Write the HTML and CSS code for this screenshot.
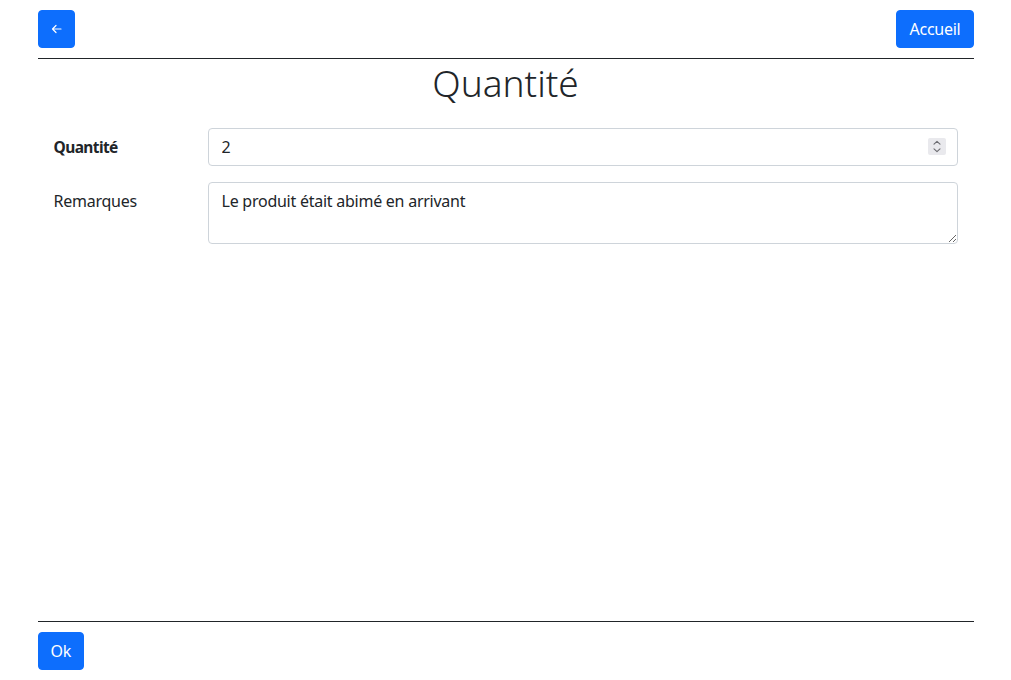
FILE: index.html
```html
<!DOCTYPE html>
<html lang="fr">
<head>
<meta charset="utf-8">
<title>Quantité</title>
<link rel="stylesheet" href="styles.css">
</head>
<body>
<div class="page">
  <header class="topbar">
    <button class="btn btn-icon" type="button" aria-label="Retour">
      <svg width="11" height="10" viewBox="0 0 11 10" fill="none" stroke="#fff" stroke-width="1.2" stroke-linecap="round" stroke-linejoin="round"><path d="M10 5H1.5M5 1.5L1.5 5L5 8.5"/></svg>
    </button>
    <button class="btn" type="button">Accueil</button>
  </header>
  <hr class="rule">
  <main class="content">
    <h1 class="title">Quantité</h1>
    <form class="form">
      <div class="form-row">
        <label class="form-label strong" for="qte">Quantité</label>
        <div class="field">
          <div class="number-wrap">
            <input id="qte" class="control" type="number" value="2">
            <span class="spinner" aria-hidden="true">
              <svg width="18" height="17" viewBox="0 0 18 17" fill="none" stroke="#6b6b70" stroke-width="1.1" stroke-linecap="round" stroke-linejoin="round"><path d="M6 6.2L9 3.4L12 6.2M6 10.8L9 13.6L12 10.8"/></svg>
            </span>
          </div>
        </div>
      </div>
      <div class="form-row">
        <label class="form-label" for="rem">Remarques</label>
        <div class="field">
          <textarea id="rem" class="control area">Le produit était abimé en arrivant</textarea>
        </div>
      </div>
    </form>
  </main>
  <hr class="rule">
  <footer class="footer">
    <button class="btn" type="button">Ok</button>
  </footer>
</div>
</body>
</html>
```

FILE: styles.css
```css
* { box-sizing: border-box; }
html, body { margin: 0; padding: 0; }
body {
  font-family: "Noto Sans", "Open Sans", sans-serif;
  font-size: 16px;
  line-height: 24px;
  color: #212529;
  background: #fff;
  letter-spacing: -0.25px;
}
.page {
  width: 936px;
  margin: 0 auto;
  min-height: 100vh;
  display: flex;
  flex-direction: column;
}
.topbar {
  display: flex;
  justify-content: space-between;
  align-items: center;
  padding-top: 10px;
}
.btn {
  font-family: inherit;
  font-size: 16px;
  line-height: 24px;
  letter-spacing: -0.25px;
  color: #fff;
  background: #0d6efd;
  border: 1px solid #0d6efd;
  border-radius: 4px;
  padding: 6px 12px;
  height: 38px;
  cursor: pointer;
}
.btn-icon {
  width: 37px;
  padding: 0;
  display: flex;
  align-items: center;
  justify-content: center;
}
.rule {
  margin: 10px 0 0;
  border: 0;
  border-top: 1px solid #212529;
  height: 0;
}
.content { flex: 1; }
.title {
  margin: 0;
  padding-top: 2px;
  text-align: center;
  font-size: 37px;
  font-weight: 300;
  line-height: 44px;
  letter-spacing: 0;
}
.form {
  padding: 23px 16px 0;
}
.form-row {
  display: flex;
  margin-bottom: 16px;
}
.form-label {
  width: 154px;
  flex: none;
  padding-top: 7px;
}
.strong { font-weight: 700; font-size: 15.5px; letter-spacing: -0.6px; }
.field { flex: 1; }
.number-wrap { position: relative; }
.control {
  display: block;
  width: 100%;
  font-family: inherit;
  font-size: 16px;
  line-height: 24px;
  letter-spacing: -0.25px;
  color: #212529;
  background: #fff;
  border: 1px solid #ced4da;
  border-radius: 4px;
  padding: 6px 12px 6px 13px;
  height: 38px;
  margin: 0;
}
.control[type=number] { -moz-appearance: textfield; appearance: textfield; }
.control::-webkit-inner-spin-button,
.control::-webkit-outer-spin-button { -webkit-appearance: none; margin: 0; }
.spinner {
  position: absolute;
  right: 12px;
  top: 10px;
  width: 18px;
  height: 17px;
  background: #e9e9ed;
  border-radius: 2px;
  display: flex;
}
.area {
  height: 62px;
  resize: vertical;
}
.footer {
  padding: 10px 0;
  display: flex;
}
```
